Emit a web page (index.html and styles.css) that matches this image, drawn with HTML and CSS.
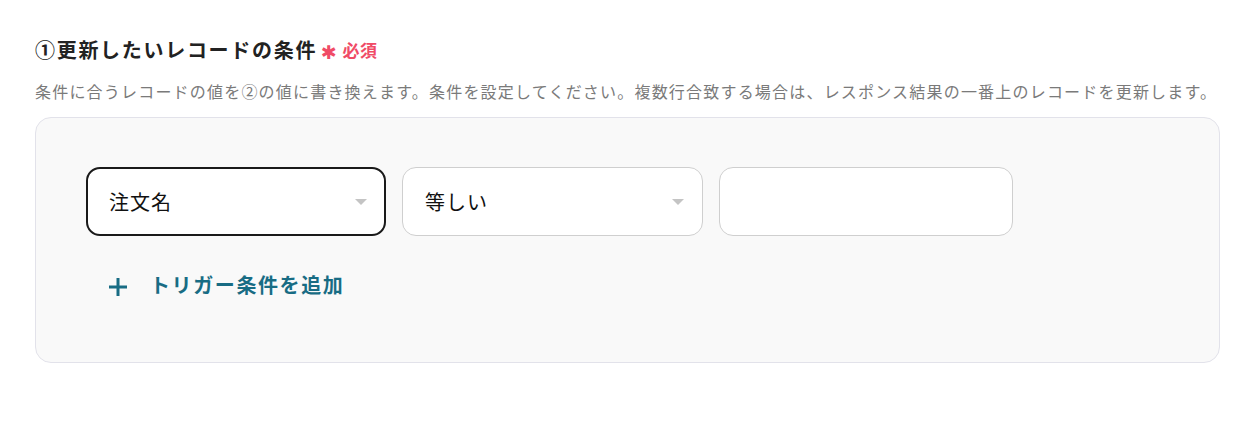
FILE: index.html
```html
<!DOCTYPE html>
<html lang="ja">
<head>
<meta charset="utf-8">
<link rel="stylesheet" href="styles.css">
</head>
<body>
<div class="section">
  <div class="title">①更新したいレコードの条件<span class="req"><span class="ast">✱</span>必須</span></div>
  <div class="desc">条件に合うレコードの値を②の値に書き換えます。条件を設定してください。複数行合致する場合は、レスポンス結果の一番上のレコードを更新します。</div>
  <div class="box">
    <div class="row">
      <div class="field select focused"><span class="val">注文名</span><span class="arrow"></span></div>
      <div class="field select"><span class="val">等しい</span><span class="arrow"></span></div>
      <div class="field input"></div>
    </div>
    <div class="add">
      <svg class="plus" width="20" height="20" viewBox="0 0 20 20"><path d="M10 1v18M1 10h18" stroke="#186c84" stroke-width="3" fill="none"/></svg>
      <span class="add-text">トリガー条件を追加</span>
    </div>
  </div>
</div>
</body>
</html>
```
FILE: styles.css
```css
html, body {
  margin: 0;
  padding: 0;
  background: #ffffff;
  font-family: "Noto Sans CJK JP", "Noto Sans", sans-serif;
}
.section {
  padding: 35px 18px 0 35px;
}
.title {
  font-size: 20px;
  font-weight: 700;
  line-height: 30px;
  height: 30px;
  color: #222222;
  letter-spacing: 1.7px;
  display: flex;
  align-items: center;
}
.req {
  display: inline-flex;
  align-items: center;
  height: 30px;
  line-height: 30px;
  color: #f04b66;
  font-size: 17px;
  font-weight: 700;
  letter-spacing: 0.5px;
  margin-left: 4px;
}
.ast {
  font-family: "DejaVu Sans", sans-serif;
  font-size: 19px;
  line-height: 1;
  margin-right: 5px;
  margin-top: 4px;
}
.desc {
  margin-top: 14px;
  font-size: 16px;
  line-height: 24px;
  letter-spacing: 1.2px;
  color: #7a7a7a;
  white-space: nowrap;
}
.box {
  margin-top: 14px;
  border: 1px solid #e2e2ea;
  border-radius: 16px;
  background: #f9f9f9;
  padding: 49px 50px 61px;
}
.row {
  display: flex;
  gap: 16px;
}
.field {
  box-sizing: border-box;
  height: 69px;
  background: #ffffff;
  border: 1px solid #cfcfcf;
  border-radius: 14px;
  display: flex;
  align-items: center;
  position: relative;
}
.select {
  width: 301px;
  padding-left: 22px;
}
.focused {
  width: 300px;
  border: 2px solid #1a1a1a;
  padding-left: 21px;
}
.input {
  width: 294px;
}
.val {
  font-size: 20px;
  letter-spacing: 1px;
  color: #111111;
}
.arrow {
  position: absolute;
  right: 18px;
  top: 31px;
  width: 0;
  height: 0;
  border-left: 6px solid transparent;
  border-right: 6px solid transparent;
  border-top: 6px solid #c4c4c4;
}
.focused .arrow {
  right: 17px;
  top: 30px;
}
.add {
  margin-top: 31px;
  height: 34px;
  display: flex;
  align-items: center;
  padding-left: 22px;
  gap: 22px;
}
.plus {
  display: block;
  margin-top: 5px;
}
.add-text {
  font-size: 20px;
  font-weight: 700;
  letter-spacing: 1.6px;
  color: #186c84;
}
```
